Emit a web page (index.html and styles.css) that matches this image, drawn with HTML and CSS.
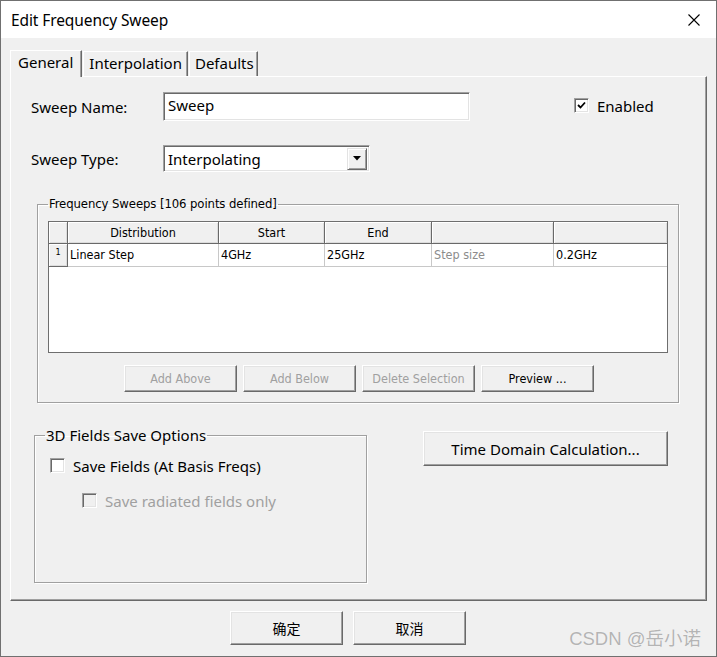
FILE: index.html
```html
<!DOCTYPE html>
<html lang="en">

<head>
  <meta charset="UTF-8" />
  <meta name="viewport" content="width=device-width, initial-scale=1.0" />
  <title>Edit Frequency Sweep</title>
  <link rel="stylesheet" href="styles.css">
</head>

<body>
  <div class="window">
    <div class="titlebar">
      <span class="title">Edit Frequency Sweep</span>
      <svg class="close" width="12" height="12" viewBox="0 0 12 12">
        <path d="M0.5 0.5 L11.5 11.5 M11.5 0.5 L0.5 11.5" stroke="#000" stroke-width="1.1" fill="none" />
      </svg>
    </div>

    <div class="client">
      <div class="tabs">
        <div class="tab active">General</div>
        <div class="tab">Interpolation</div>
        <div class="tab">Defaults</div>
      </div>

      <div class="panel">
        <div class="row row-name">
          <span class="label">Sweep Name:</span>
          <div class="edit">Sweep</div>
          <div class="check enabled">
            <span class="box">
              <svg width="9" height="9" viewBox="0 0 9 9">
                <path d="M1 4 L3.5 6.5 L8 1.5" stroke="#000" stroke-width="1.8" fill="none" />
              </svg>
            </span>
            Enabled
          </div>
        </div>

        <div class="row row-type">
          <span class="label">Sweep Type:</span>
          <div class="combo">
            <span class="combo-text">Interpolating</span>
            <span class="drop">
              <svg width="8" height="5" viewBox="0 0 8 5">
                <path d="M0 0 H8 L4 4.5 Z" fill="#000" />
              </svg>
            </span>
          </div>
        </div>

        <fieldset class="group sweeps">
          <legend>Frequency Sweeps [106 points defined]</legend>
          <div class="grid">
            <div class="cell head corner"></div>
            <div class="cell head">Distribution</div>
            <div class="cell head">Start</div>
            <div class="cell head">End</div>
            <div class="cell head"></div>
            <div class="cell head last"></div>

            <div class="cell head rownum">1</div>
            <div class="cell">Linear Step</div>
            <div class="cell">4GHz</div>
            <div class="cell">25GHz</div>
            <div class="cell hint">Step size</div>
            <div class="cell last">0.2GHz</div>
          </div>
          <div class="grid-buttons">
            <button class="btn small" disabled>Add Above</button>
            <button class="btn small" disabled>Add Below</button>
            <button class="btn small" disabled>Delete Selection</button>
            <button class="btn small">Preview ...</button>
          </div>
        </fieldset>

        <div class="lower">
          <fieldset class="group fields">
            <legend>3D Fields Save Options</legend>
            <div class="check save-fields">
              <span class="box"></span>
              Save Fields (At Basis Freqs)
            </div>
            <div class="check radiated disabled">
              <span class="box"></span>
              Save radiated fields only
            </div>
          </fieldset>
          <button class="btn time">Time Domain Calculation...</button>
        </div>
      </div>

      <div class="footer">
        <button class="btn dlg">确定</button>
        <button class="btn dlg">取消</button>
        <span class="watermark">CSDN @岳小诺</span>
      </div>
    </div>
  </div>
</body>

</html>
```

FILE: styles.css
```css
* {
  margin: 0;
  padding: 0;
  box-sizing: border-box;
}

body {
  background: #fff;
  font-family: "Noto Sans", "Noto Sans CJK SC", sans-serif;
  font-size: 15px;
  color: #000;
}

.window {
  width: 717px;
  height: 657px;
  border: 1px solid #707070;
  display: flex;
  flex-direction: column;
  background: #f0f0f0;
}

.titlebar {
  height: 37px;
  background: #fff;
  display: flex;
  align-items: center;
  padding: 0 15px 0 10px;
}

.title {
  font-size: 15.5px;
  flex-grow: 1;
  letter-spacing: -0.1px;
}

.close {
  margin-right: 1px;
}

.client {
  flex-grow: 1;
  position: relative;
}

/* tabs */

.tabs {
  display: flex;
  align-items: flex-end;
  margin: 11px 0 0 9px;
  height: 27px;
}

.tab {
  height: 25px;
  padding: 0 5px;
  font-size: 15px;
  line-height: 23px;
  border-top: 1px solid #fff;
  border-left: 1px solid #fff;
  border-right: 1px solid #696969;
  box-shadow: inset -1px 0 0 #a0a0a0;
  margin-right: 1px;
}

.tab.active {
  height: 27px;
  padding: 0 8px 0 7px;
  line-height: 23px;
  position: relative;
  z-index: 1;
  margin-bottom: -1px;
  background: #f0f0f0;
}

.tab:nth-child(3) {
  padding-right: 3px;
}

.panel {
  margin: 0 9px;
  height: 525px;
  border-top: 1px solid #fff;
  border-left: 1px solid #fff;
  border-right: 1px solid #696969;
  border-bottom: 1px solid #696969;
  box-shadow: inset -1px -1px 0 #a0a0a0;
  padding: 15px 0 0 20px;
}

.row {
  display: flex;
  align-items: center;
}

.label {
  width: 132px;
  font-size: 15px;
}

.row-name {
  height: 29px;
}

.row-type {
  height: 27px;
  margin-top: 24px;
}

.edit,
.combo {
  background: #fff;
  border-top: 1px solid #a0a0a0;
  border-left: 1px solid #a0a0a0;
  border-right: 1px solid #fff;
  border-bottom: 1px solid #fff;
  box-shadow: inset 1px 1px 0 #696969, inset -1px -1px 0 #e3e3e3;
  font-size: 15px;
}

.edit {
  width: 307px;
  height: 29px;
  padding: 0 4px;
  line-height: 24px;
}

.combo {
  width: 207px;
  height: 27px;
  display: flex;
  align-items: center;
  padding: 2px 2px 2px 4px;
}

.combo-text {
  flex-grow: 1;
}

.drop {
  width: 20px;
  height: 22px;
  display: flex;
  align-items: center;
  justify-content: center;
  background: #f0f0f0;
  border-top: 1px solid #e3e3e3;
  border-left: 1px solid #e3e3e3;
  border-right: 1px solid #696969;
  border-bottom: 1px solid #696969;
  box-shadow: inset 1px 1px 0 #fff, inset -1px -1px 0 #a0a0a0;
}

/* checkboxes */

.check {
  display: flex;
  align-items: center;
  font-size: 15px;
}

.box {
  width: 15px;
  height: 15px;
  background: #fff;
  border-top: 1px solid #a0a0a0;
  border-left: 1px solid #a0a0a0;
  border-right: 1px solid #fff;
  border-bottom: 1px solid #fff;
  box-shadow: inset 1px 1px 0 #696969, inset -1px -1px 0 #e3e3e3;
  margin-right: 8px;
  display: flex;
  align-items: center;
  justify-content: center;
}

.enabled {
  margin-left: 104px;
  margin-top: -2px;
}

.check.disabled {
  color: #a0a0a0;
}

.check.disabled .box {
  background: #f0f0f0;
}

/* group boxes */

.group {
  border: 1px solid #a0a0a0;
  box-shadow: 1px 1px 0 #fff, inset 1px 1px 0 #fff;
}

.group legend {
  padding: 0 1px;
  line-height: 16px;
}

.sweeps {
  width: 642px;
  height: 207px;
  margin: 24px 0 0 6px;
  padding: 9px 0 0 10px;
}

.sweeps legend {
  font-family: "DejaVu Sans", "Liberation Sans", sans-serif;
  font-stretch: condensed;
  font-size: 13px;
  letter-spacing: -0.1px;
}

.grid {
  width: 620px;
  height: 132px;
  background: #fff;
  border: 1px solid #6e6e6e;
  display: grid;
  grid-template-columns: 19px 151px 106px 107px 122px 1fr;
  grid-template-rows: 22px 23px;
  align-content: start;
  font-family: "DejaVu Sans", "Liberation Sans", sans-serif;
  font-stretch: condensed;
  font-size: 12.5px;
}

.cell {
  border-right: 1px solid #c8c8c8;
  border-bottom: 1px solid #c8c8c8;
  padding: 0 2px;
  line-height: 22px;
  white-space: nowrap;
  overflow: hidden;
}

.cell.last {
  border-right: none;
}

.cell.head {
  background: #f0f0f0;
  text-align: center;
  border-right: 1px solid #696969;
  border-bottom: 1px solid #696969;
  box-shadow: inset 1px 1px 0 #fff, inset -1px -1px 0 #dcdcdc;
  line-height: 21px;
}

.cell.head.last {
  border-right: none;
}

.cell.rownum {
  font-size: 9px;
  line-height: 16px;
  text-align: center;
}

.cell.hint {
  color: #8c8c8c;
}

.grid-buttons {
  display: flex;
  gap: 6px;
  margin: 12px 0 0 76px;
}

/* buttons */

.btn {
  font-family: "Noto Sans", "Noto Sans CJK SC", sans-serif;
  font-size: 15px;
  color: #000;
  background: #f0f0f0;
  border-top: 1px solid #fff;
  border-left: 1px solid #fff;
  border-right: 1px solid #696969;
  border-bottom: 1px solid #696969;
  box-shadow: inset -1px -1px 0 #a0a0a0, inset 1px 1px 0 #e3e3e3;
}

.btn.small {
  width: 113px;
  height: 27px;
  font-family: "DejaVu Sans", "Liberation Sans", sans-serif;
  font-stretch: condensed;
  font-size: 12.5px;
}

.btn:disabled {
  color: #a0a0a0;
}

.lower {
  display: flex;
  align-items: flex-start;
  margin-top: 24px;
}

.fields {
  width: 333px;
  height: 156px;
  margin-left: 3px;
  padding: 15px 0 0 15px;
}

.fields legend {
  margin-left: -5px;
  font-size: 15px;
}

.save-fields {
  height: 15px;
}

.radiated {
  margin: 20px 0 0 32px;
  height: 15px;
}

.time {
  width: 245px;
  height: 35px;
  margin: 4px 0 0 56px;
}

.footer {
  display: flex;
  gap: 10px;
  padding: 10px 0 0 229px;
}

.btn.dlg {
  width: 113px;
  height: 34px;
  font-family: "Noto Sans CJK SC", sans-serif;
  font-size: 14px;
}

.watermark {
  position: absolute;
  right: 15px;
  bottom: 6px;
  font-family: "Liberation Sans", "Noto Sans CJK SC", sans-serif;
  font-size: 18.5px;
  color: #b4b4b4;
  text-shadow: 0 0 1px #fff;
}
```
